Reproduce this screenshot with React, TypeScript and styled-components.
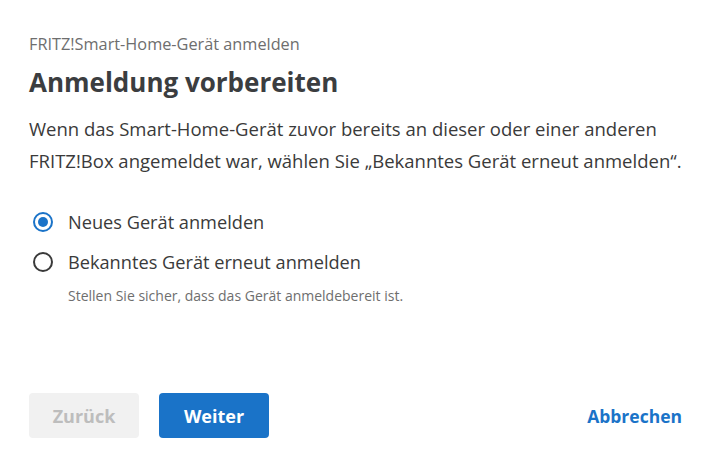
import { useState } from "react";
import styled, { createGlobalStyle } from "styled-components";

const GlobalStyle = createGlobalStyle`
  html, body {
    margin: 0;
    padding: 0;
    background: #ffffff;
  }
  body {
    font-family: "Open Sans", "Noto Sans", "Liberation Sans", sans-serif;
    -webkit-font-smoothing: antialiased;
  }
`;

const Dialog = styled.div`
  width: 725px;
  height: 464px;
  box-sizing: border-box;
  padding: 34px 43px 26px 29px;
  display: flex;
  flex-direction: column;
`;

const Overline = styled.div`
  font-size: 16.3px;
  color: #6e6e6e;
  line-height: 20px;
`;

const Title = styled.h1`
  margin: 10px 0 0;
  font-size: 26px;
  font-weight: 700;
  color: #3b3d40;
  line-height: 36px;
`;

const Text = styled.p`
  margin: 13px 0 0;
  font-size: 18.5px;
  line-height: 32px;
  color: #3a3a3a;
`;

const Options = styled.div`
  margin-top: 35px;
  display: flex;
  flex-direction: column;
  gap: 20px;
`;

const Option = styled.label`
  display: flex;
  align-items: center;
  gap: 15px;
  font-size: 18.2px;
  line-height: 20px;
  color: #3a3a3a;
  cursor: pointer;
  padding-left: 4px;
`;

const Radio = styled.span<{ $checked: boolean }>`
  width: 16px;
  height: 16px;
  border-radius: 50%;
  border: 2px solid ${(p) => (p.$checked ? "#1a73c8" : "#3a3a3a")};
  display: flex;
  align-items: center;
  justify-content: center;
  flex-shrink: 0;

  &::after {
    content: "";
    width: 10px;
    height: 10px;
    border-radius: 50%;
    background: #1a73c8;
    display: ${(p) => (p.$checked ? "block" : "none")};
  }
`;

const Hint = styled.div`
  margin: 15px 0 0 39px;
  font-size: 14px;
  line-height: 18px;
  color: #6e6e6e;
`;

const Footer = styled.div`
  margin-top: auto;
  display: flex;
  align-items: center;
  gap: 20px;
`;

const Button = styled.button<{ $primary?: boolean }>`
  width: 110px;
  height: 45px;
  border: none;
  border-radius: 4px;
  font-family: inherit;
  font-size: 18px;
  font-weight: 700;
  background: ${(p) => (p.$primary ? "#1a73c8" : "#f1f1f1")};
  color: ${(p) => (p.$primary ? "#ffffff" : "#bdbdbd")};
  cursor: ${(p) => (p.$primary ? "pointer" : "default")};
`;

const LinkButton = styled.button`
  margin-left: auto;
  border: none;
  background: none;
  padding: 0;
  font-family: inherit;
  font-size: 17.5px;
  font-weight: 700;
  color: #1a73c8;
  cursor: pointer;
`;

export default function App() {
  const [choice, setChoice] = useState("new");

  return (
    <>
      <GlobalStyle />
      <Dialog>
        <Overline>FRITZ!Smart-Home-Gerät anmelden</Overline>
        <Title>Anmeldung vorbereiten</Title>
        <Text>
          Wenn das Smart-Home-Gerät zuvor bereits an dieser oder einer anderen
          <br />
          FRITZ!Box angemeldet war, wählen Sie „Bekanntes Gerät erneut anmelden“.
        </Text>
        <Options>
          <Option onClick={() => setChoice("new")}>
            <Radio $checked={choice === "new"} />
            Neues Gerät anmelden
          </Option>
          <div>
            <Option onClick={() => setChoice("known")}>
              <Radio $checked={choice === "known"} />
              Bekanntes Gerät erneut anmelden
            </Option>
            <Hint>Stellen Sie sicher, dass das Gerät anmeldebereit ist.</Hint>
          </div>
        </Options>
        <Footer>
          <Button disabled>Zurück</Button>
          <Button $primary>Weiter</Button>
          <LinkButton>Abbrechen</LinkButton>
        </Footer>
      </Dialog>
    </>
  );
}
